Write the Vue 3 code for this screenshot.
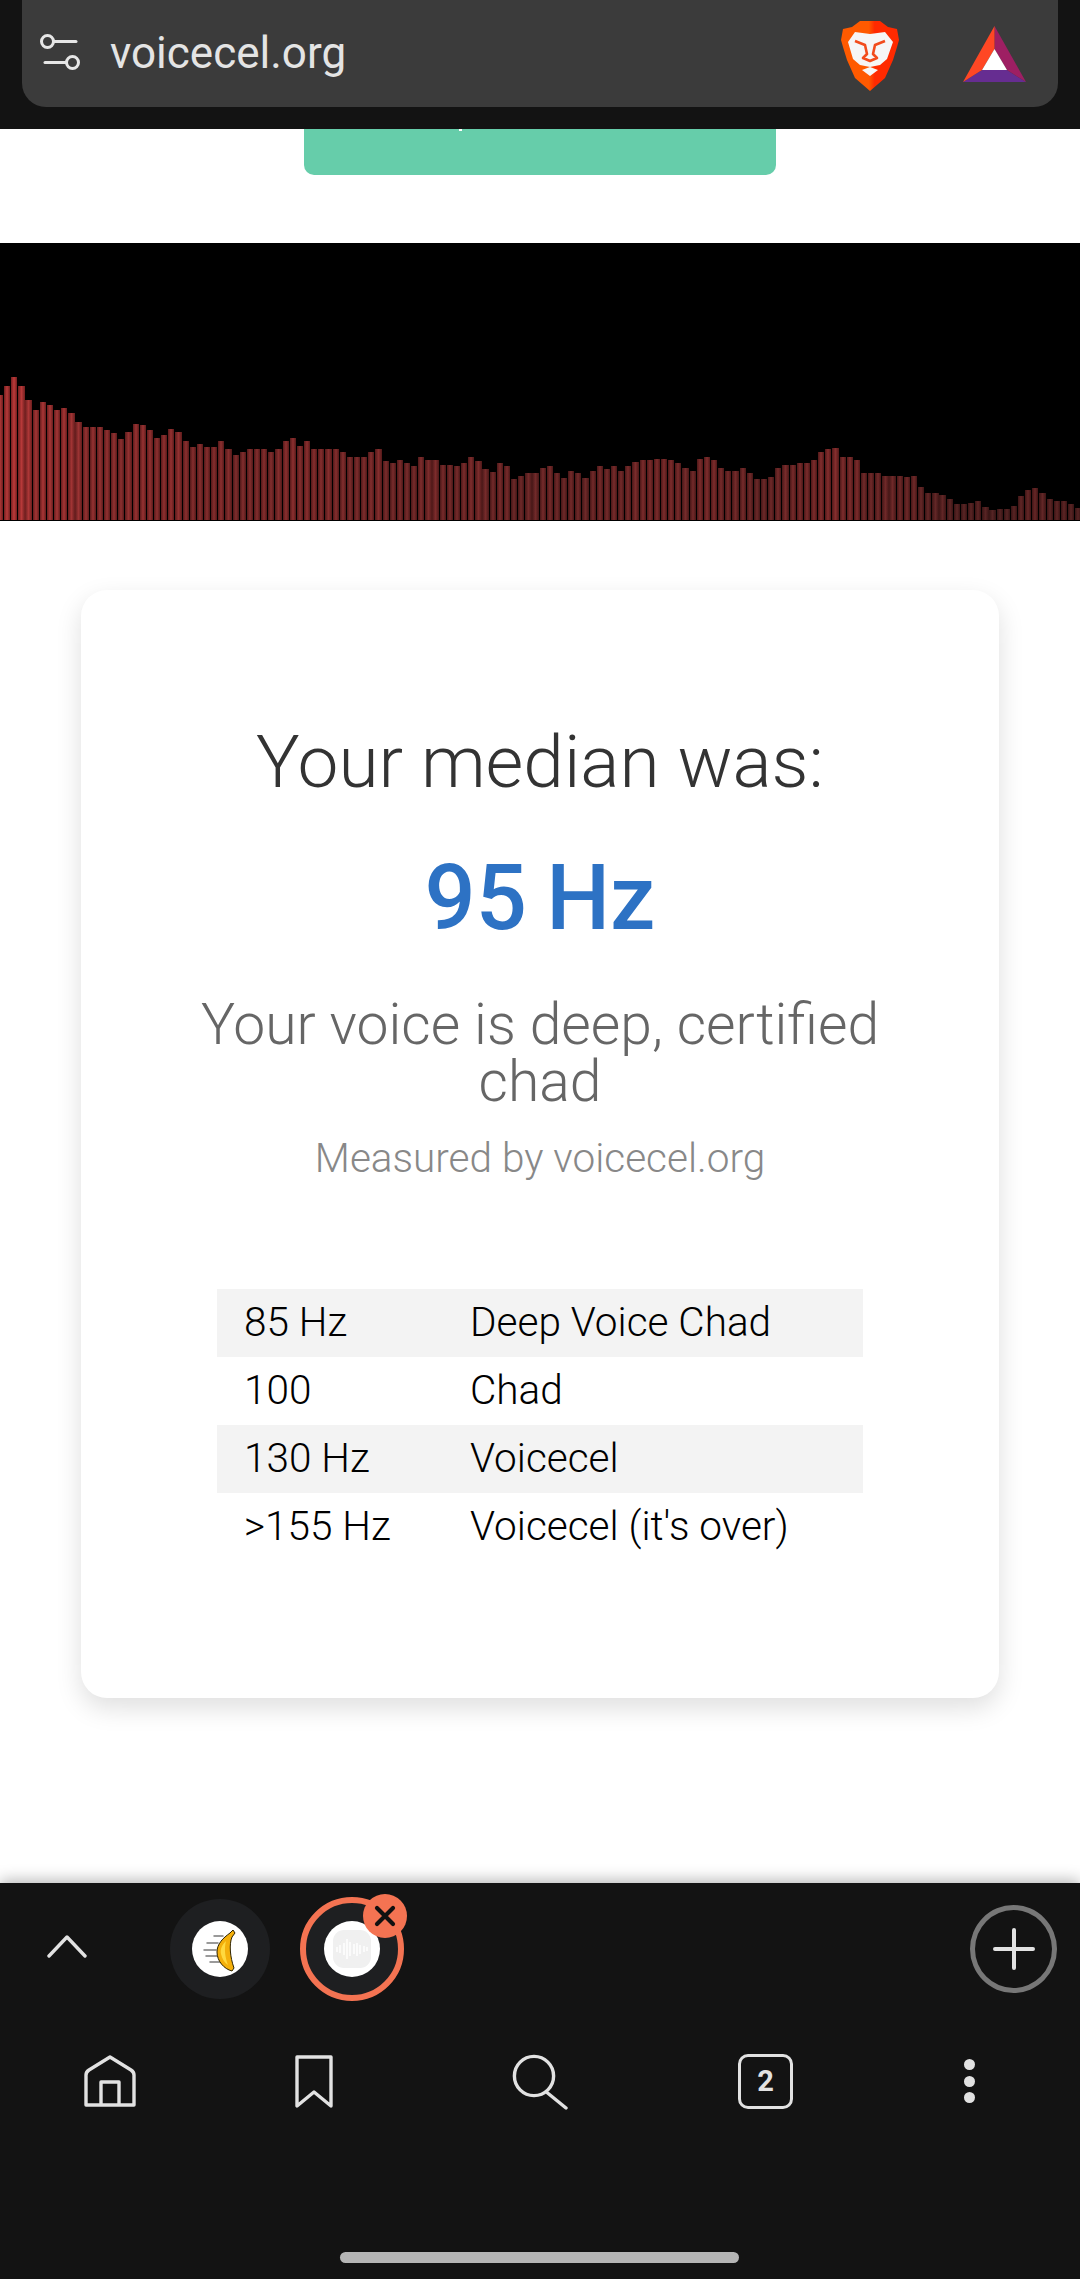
<script setup>
const tops = [165,137,112,137,180,210,187,195,210,203,220,245,262,260,262,270,280,298,277,252,254,270,295,285,268,277,302,320,312,320,322,302,326,345,335,327,327,326,335,328,302,294,318,302,326,326,326,326,335,352,352,352,335,328,362,370,360,370,377,352,360,360,376,376,378,370,352,362,386,395,368,378,417,408,400,
  400,385,377,400,415,393,400,415,392,377,388,377,392,377,367,360,360,358,358,360,370,385,392,358,350,360,383,392,392,383,400,418,416,410,385,376,376,368,368,360,337,327,325,350,352,360,400,400,400,408,408,408,410,408,442,458,458,465,477,492,492,490,483,502,510,508,508,498,467,450,443,460,477,483,483,492,505]
const bars = tops.map((t) => {
  const h = (540 - t) / 3
  const r = Math.round(78 + h * 0.78)
  const g = Math.round(34 + h * 0.17)
  const er = Math.round(r * 0.62)
  const eg = Math.round(g * 0.55)
  return {
    height: h + 'px',
    background: `linear-gradient(90deg, rgb(${er},${eg},${eg}), rgb(${r},${g},${g}) 50%, rgb(${er},${eg},${eg}))`
  }
})
const rows = [
  ['85 Hz', 'Deep Voice Chad'],
  ['100', 'Chad'],
  ['130 Hz', 'Voicecel'],
  ['>155 Hz', "Voicecel (it's over)"]
]
</script>

<template>
  <div class="page">
    <header class="topbar">
      <div class="urlbar">
        <svg class="tune" viewBox="0 0 42 42" width="42" height="42" fill="none" stroke="#e6e6e6" stroke-width="3" stroke-linecap="round">
          <circle cx="8.5" cy="8.5" r="6" />
          <path d="M14.5 8.5H37" />
          <circle cx="33.5" cy="29.5" r="6" />
          <path d="M27.5 29.5H6" />
        </svg>
        <span class="url">voicecel.org</span>
        <svg class="brave" viewBox="0 0 58 70" width="58" height="70">
          <defs>
            <linearGradient id="bg" x1="0" x2="1" y1="0" y2="0">
              <stop offset="0" stop-color="#ff5a00" />
              <stop offset=".48" stop-color="#ff5a00" />
              <stop offset=".58" stop-color="#ff2a00" />
              <stop offset="1" stop-color="#ff2a00" />
            </linearGradient>
          </defs>
          <path fill="url(#bg)" d="M19 0H39L47 6L56 8L58 19L56 26L52 39L44 57L29 70L14 57L6 39L2 26L0 19L2 8L11 6Z" />
          <path fill="#f6f6f6" d="M7 21L14 11L29 13L44 11L52 21L46 38L39 44L29 46L19 44L12 38ZM21 49L29 46L37 49L29 55Z" />
          <path fill="none" stroke="#f24c1c" stroke-width="2.6" stroke-linejoin="round" d="M14 20L24 24L26 33L22 37L29 40L36 37L32 33L34 24L44 20" />
        </svg>
        <svg class="bat" viewBox="0 0 63 56" width="63" height="56">
          <path fill="#662d91" d="M0 56H63L44 44H19Z" />
          <path fill="#9e1f63" d="M31.5 0L63 56L44 44L31.5 23Z" />
          <path fill="#ff4724" d="M31.5 0L0 56L19 44L31.5 23Z" />
          <path fill="#fff" d="M31.5 23L44 44H19Z" />
        </svg>
      </div>
    </header>

    <main class="content">
      <div class="button-stub"><i class="tick"></i></div>

      <div class="viz">
        <div class="bars">
          <span v-for="(b, i) in bars" :key="i" class="bar" :style="b"></span>
        </div>
      </div>

      <section class="card">
        <h1 class="title">Your median was:</h1>
        <div class="hz">95 Hz</div>
        <h2 class="verdict">Your voice is deep, certified chad</h2>
        <p class="by">Measured by voicecel.org</p>
        <table class="ranges">
          <tbody>
            <tr v-for="r in rows" :key="r[0]">
              <td class="c1">{{ r[0] }}</td>
              <td>{{ r[1] }}</td>
            </tr>
          </tbody>
        </table>
      </section>
    </main>

    <footer class="bottom">
      <div class="tabs">
        <svg class="chev" viewBox="0 0 40 24" width="40" height="24" fill="none" stroke="#e2e2e2" stroke-width="3.4" stroke-linecap="round" stroke-linejoin="round">
          <path d="M2 22L20 3l18 19" />
        </svg>
        <div class="tab first">
          <div class="fav">
            <svg viewBox="0 0 56 56" width="56" height="56">
              <g stroke="#333" stroke-width="1.5" stroke-linecap="round" opacity=".65">
                <path d="M22 15h9M15 22h11M12 29h12M14 35h11M18 41h10" />
              </g>
              <path fill="#f4b00c" stroke="#2c2200" stroke-width="1" d="M38 12L41 9L43 12L40 16C37 23 38 36 42 47L40 50C32 48 25 40 25 31C25 23 31 17 38 12Z" />
              <path fill="#ffd93f" d="M34 20C30 24 28 28 29 33C30 38 33 42 36 44C33 36 32 28 34 20Z" />
            </svg>
          </div>
        </div>
        <div class="tab second">
          <div class="fav">
            <div class="wave">
              <i v-for="(h, i) in [5, 8, 12, 20, 14, 10, 13, 9, 6, 4]" :key="i" :style="{ height: h + 'px' }"></i>
            </div>
          </div>
          <span class="close">
            <svg viewBox="0 0 24 24" width="24" height="24" fill="none" stroke="#111" stroke-width="4.2" stroke-linecap="round">
              <path d="M4 4l16 16M20 4L4 20" />
            </svg>
          </span>
        </div>
        <div class="add">
          <svg viewBox="0 0 44 44" width="44" height="44" fill="none" stroke="#e2e2e2" stroke-width="4" stroke-linecap="round">
            <path d="M22 3v38M3 22h38" />
          </svg>
        </div>
      </div>

      <nav class="nav">
        <svg viewBox="0 0 54 54" width="54" height="54" fill="none" stroke="#e2e2e2" stroke-width="3.4" stroke-linejoin="round">
          <path d="M3 51V21q0-3 3-5L27 3l21 13q3 2 3 5v30z" />
          <path d="M18 51V28h18v23" />
        </svg>
        <svg viewBox="0 0 40 54" width="40" height="54" fill="none" stroke="#e2e2e2" stroke-width="3.4" stroke-linejoin="round">
          <path d="M3 3h34v49L20 38 3 52z" />
        </svg>
        <svg viewBox="0 0 58 58" width="58" height="58" fill="none" stroke="#e2e2e2" stroke-width="3.4" stroke-linecap="round">
          <circle cx="22" cy="24" r="19.6" />
          <path d="M35.6 41L54 56" />
        </svg>
        <div class="count">2</div>
        <div class="dots"><i></i><i></i><i></i></div>
      </nav>

      <div class="gesture"></div>
    </footer>
  </div>
</template>

<style>
html, body { margin: 0; background: #fff; }
</style>

<style scoped>
.page {
  width: 1080px;
  height: 2279px;
  display: flex;
  flex-direction: column;
  overflow: hidden;
  font-family: Roboto, "Liberation Sans", sans-serif;
  background: #fff;
}
.topbar {
  height: 129px;
  background: #131313;
  padding: 0 22px;
  box-sizing: border-box;
  flex: none;
}
.urlbar {
  height: 107px;
  background: #3b3b3b;
  border-radius: 0 0 24px 24px;
  display: flex;
  align-items: center;
  padding: 0 32px 0 17px;
  box-sizing: border-box;
}
.tune { flex: none; }
.url {
  margin-left: 29px;
  margin-bottom: 2px;
  color: #e4e4e4;
  font-size: 44px;
  font-weight: 400;
  flex: 1;
}
.brave { margin-top: 4px; }
.bat { margin-left: 64px; }
.content { flex: 1; min-height: 0; display: flex; flex-direction: column; }
.button-stub {
  position: relative;
  width: 472px;
  height: 46px;
  margin: 0 auto;
  background: #66cdaa;
  border-radius: 0 0 10px 10px;
  flex: none;
}
.tick {
  position: absolute;
  left: 155px;
  top: 0;
  width: 3px;
  height: 2px;
  background: #fff;
}
.viz {
  margin-top: 68px;
  height: 278px;
  background: #000;
  padding-bottom: 1px;
  box-sizing: border-box;
  flex: none;
  overflow: hidden;
}
.bars {
  height: 100%;
  display: flex;
  align-items: flex-end;
  filter: blur(0.7px);
}
.bar {
  flex: 0 0 6.2px;
  margin-right: 0.96px;
}
.bar:first-child { margin-left: -3.1px; }
.card {
  margin: 69px 81px 0;
  height: 1108px;
  box-sizing: border-box;
  border-radius: 26px;
  background: #fff;
  box-shadow: 0 10px 26px rgba(0, 0, 0, .13);
  text-align: center;
  padding-top: 130px;
  flex: none;
}
.title {
  margin: 0;
  font-size: 73px;
  font-weight: 300;
  line-height: 84px;
  color: #333;
}
.hz {
  margin-top: 45px;
  font-size: 90px;
  font-weight: 500;
  line-height: 100px;
  word-spacing: -3px;
  color: #2d72c4;
}
.verdict {
  margin: 47px auto 0;
  width: 720px;
  font-size: 57px;
  font-weight: 300;
  line-height: 57px;
  color: #666;
}
.by {
  margin: 25px 0 0;
  font-size: 40.5px;
  font-weight: 300;
  line-height: 46px;
  color: #888;
}
.ranges {
  margin: 108px auto 0;
  width: 646px;
  border-collapse: collapse;
  font-size: 40.5px;
  font-weight: 300;
  color: #000;
  text-align: left;
}
.ranges tr { height: 68px; }
.ranges tr:nth-child(odd) { background: #f3f3f3; }
.ranges td { padding: 0 0 3px; box-sizing: border-box; }
.ranges .c1 { width: 253px; padding-left: 27px; }
.bottom {
  position: relative;
  height: 396px;
  flex: none;
  background: #131313;
  box-shadow: 0 -3px 14px rgba(0, 0, 0, .28);
  display: flex;
  flex-direction: column;
}
.tabs {
  display: flex;
  align-items: center;
  height: 132px;
  padding-left: 47px;
}
.chev { flex: none; margin-bottom: 6px; }
.tab {
  position: relative;
  width: 100px;
  height: 100px;
  border-radius: 50%;
  background: #1e1f21;
  display: flex;
  align-items: center;
  justify-content: center;
  box-sizing: border-box;
  flex: none;
}
.first { margin-left: 83px; }
.second {
  margin-left: 30px;
  width: 104px;
  height: 104px;
  border: 6px solid #f47352;
}
.fav {
  width: 56px;
  height: 56px;
  border-radius: 50%;
  background: #fff;
  display: flex;
  align-items: center;
  justify-content: center;
  overflow: hidden;
}
.wave {
  width: 38px;
  height: 38px;
  border-radius: 11px;
  background: #f0f0f0;
  display: flex;
  align-items: center;
  justify-content: center;
  gap: 1.4px;
}
.wave i { width: 2px; background: #fbfbfb; display: block; }
.close {
  position: absolute;
  top: -9px;
  right: -9px;
  width: 44px;
  height: 44px;
  border-radius: 50%;
  background: #f47352;
  display: flex;
  align-items: center;
  justify-content: center;
}
.add {
  margin-left: auto;
  margin-right: 23px;
  width: 87px;
  height: 88px;
  box-sizing: border-box;
  border: 5px solid #777;
  border-radius: 50%;
  display: flex;
  align-items: center;
  justify-content: center;
}
.nav {
  position: relative;
  display: flex;
  align-items: center;
  height: 64px;
  margin-top: 34px;
}
.nav > svg, .nav > div { position: absolute; }
.nav > svg:nth-child(1) { left: 83px; }
.nav > svg:nth-child(2) { left: 294px; }
.nav > svg:nth-child(3) { left: 512px; }
.count {
  left: 738px;
  width: 55px;
  height: 55px;
  box-sizing: border-box;
  border: 3.5px solid #e2e2e2;
  border-radius: 10px;
  color: #e2e2e2;
  font-size: 29px;
  font-weight: 700;
  display: flex;
  align-items: center;
  justify-content: center;
}
.dots {
  left: 964px;
  display: flex;
  flex-direction: column;
  gap: 5.5px;
}
.dots i { width: 11px; height: 11px; border-radius: 50%; background: #e2e2e2; display: block; }
.gesture {
  width: 399px;
  height: 11px;
  border-radius: 5.5px;
  background: #b5b5b5;
  position: absolute;
  left: 340px;
  top: 369px;
}
</style>
